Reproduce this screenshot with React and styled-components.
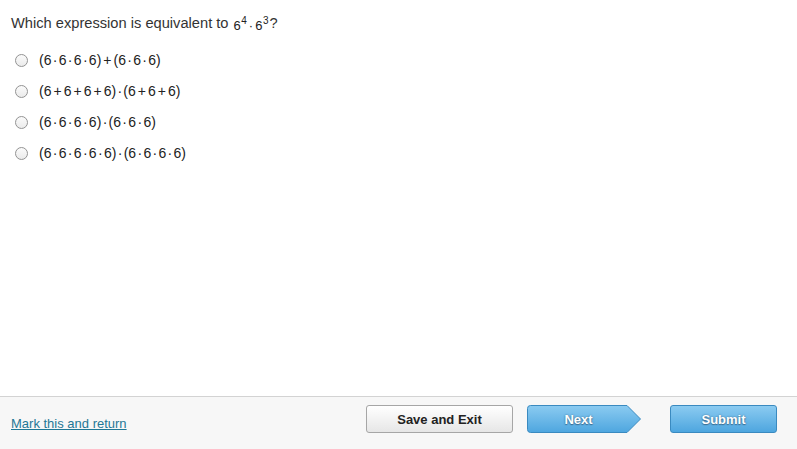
import React from "react";
import styled, { createGlobalStyle } from "styled-components";

const Global = createGlobalStyle`
  html, body { margin: 0; padding: 0; background: #fff; }
  body { font-family: "Liberation Sans", Arial, sans-serif; }
  #root { height: 100vh; }
`;

const Page = styled.div`
  height: 100vh;
  display: flex;
  flex-direction: column;
`;

const Main = styled.main`
  flex: 1;
  padding: 13px 11px 0;
`;

const Question = styled.div`
  font-size: 14.67px;
  line-height: 20px;
  color: #333;
  display: flex;
  align-items: baseline;
  height: 20px;
`;

const MathInline = styled.span`
  font-family: "Liberation Sans", Arial, sans-serif;
  font-size: 13px;
  color: #222;
  margin-left: 5px;
  margin-right: 1px;
  position: relative;
  top: 2px;
`;

const Sup = styled.sup`
  font-size: 10px;
  vertical-align: 6px;
  line-height: 0;
  margin-left: 0.5px;
`;

const Op = styled.span`
  display: inline-block;
  margin: 0 ${(p) => p.$gap ?? 1.3}px;
`;

const Options = styled.div`
  margin-top: 11px;
  display: flex;
  flex-direction: column;
`;

const OptionRow = styled.label`
  display: flex;
  align-items: center;
  height: 31px;
  cursor: pointer;
`;

const Radio = styled.input.attrs({ type: "radio", name: "ans" })`
  appearance: none;
  width: 13px;
  height: 13px;
  margin: 2px 0 0 4px;
  border: 1px solid #939393;
  border-radius: 50%;
  background: linear-gradient(#fbfbfb, #ebebeb);
  box-sizing: border-box;
`;

const Expr = styled.span`
  margin-left: 11px;
  font-family: "Liberation Sans", Arial, sans-serif;
  font-size: 14px;
  color: #222;
`;

const Footer = styled.footer`
  height: 44px;
  border-top: 1px solid #d3d3d3;
  background: #f7f7f7;
  display: flex;
  align-items: flex-start;
  padding: 8px 20px 0 11px;
`;

const MarkLink = styled.a`
  font-size: 13px;
  color: #1f7896;
  text-decoration: underline;
  margin-top: 11px;
  margin-right: auto;
`;

const BaseButton = styled.button`
  height: 28px;
  font-family: "Liberation Sans", Arial, sans-serif;
  font-weight: bold;
  font-size: 13px;
  border-radius: 3px;
  padding: 0;
  cursor: pointer;
`;

const GreyButton = styled(BaseButton)`
  width: 147px;
  color: #222;
  border: 1px solid #a6a6a6;
  background: linear-gradient(#ffffff, #e6e6e6);
`;

const BlueButton = styled(BaseButton)`
  width: ${(p) => p.$w}px;
  margin-left: ${(p) => p.$ml}px;
  color: #fff;
  text-shadow: 0 0 2px #3d6f93, 0 1px 1px #3d6f93;
  border: 1px solid #3a8ac0;
  background: linear-gradient(#8bcbf1, #4ea6df);
`;

const ArrowButton = styled.button`
  position: relative;
  width: 115px;
  height: 29px;
  margin-left: 14px;
  padding: 0 12px 0 0;
  border: none;
  background: transparent;
  font-family: "Liberation Sans", Arial, sans-serif;
  font-weight: bold;
  font-size: 13px;
  color: #fff;
  text-shadow: 0 0 2px #3d6f93, 0 1px 1px #3d6f93;
  cursor: pointer;
  svg {
    position: absolute;
    left: 0;
    top: 0;
  }
  span {
    position: relative;
  }
`;

const options = [
  ["(", "6", "d", "6", "d", "6", "d", "6", ")", "+", "(", "6", "d", "6", "d", "6", ")"],
  ["(", "6", "+", "6", "+", "6", "+", "6", ")", "d", "(", "6", "+", "6", "+", "6", ")"],
  ["(", "6", "d", "6", "d", "6", "d", "6", ")", "d", "(", "6", "d", "6", "d", "6", ")"],
  ["(", "6", "d", "6", "d", "6", "d", "6", "d", "6", ")", "d", "(", "6", "d", "6", "d", "6", "d", "6", ")"],
];

function Expression({ tokens }) {
  return (
    <Expr>
      {tokens.map((t, i) =>
        t === "d" ? (
          <Op key={i}>·</Op>
        ) : t === "+" ? (
          <Op key={i} $gap={2}>+</Op>
        ) : (
          <React.Fragment key={i}>{t}</React.Fragment>
        )
      )}
    </Expr>
  );
}

export default function App() {
  return (
    <Page>
      <Global />
      <Main>
        <Question>
          Which expression is equivalent to
          <MathInline>
            6<Sup>4</Sup>
            <Op $gap={2}>·</Op>6<Sup>3</Sup>
          </MathInline>
          ?
        </Question>
        <Options>
          {options.map((o, i) => (
            <OptionRow key={i}>
              <Radio />
              <Expression tokens={o} />
            </OptionRow>
          ))}
        </Options>
      </Main>
      <Footer>
        <MarkLink href="#">Mark this and return</MarkLink>
        <GreyButton>Save and Exit</GreyButton>
        <ArrowButton>
          <svg width="115" height="29" viewBox="0 0 115 29">
            <defs>
              <linearGradient id="nextg" x1="0" y1="0" x2="0" y2="1">
                <stop offset="0" stopColor="#8bcbf1" />
                <stop offset="1" stopColor="#4ea6df" />
              </linearGradient>
            </defs>
            <path
              d="M3.5 0.5 H100 L113.5 14 L100 27.5 H3.5 Q0.5 27.5 0.5 24.5 V3.5 Q0.5 0.5 3.5 0.5 Z"
              fill="url(#nextg)"
              stroke="#3a8ac0"
            />
          </svg>
          <span>Next</span>
        </ArrowButton>
        <BlueButton $w={107} $ml={28}>Submit</BlueButton>
      </Footer>
    </Page>
  );
}
